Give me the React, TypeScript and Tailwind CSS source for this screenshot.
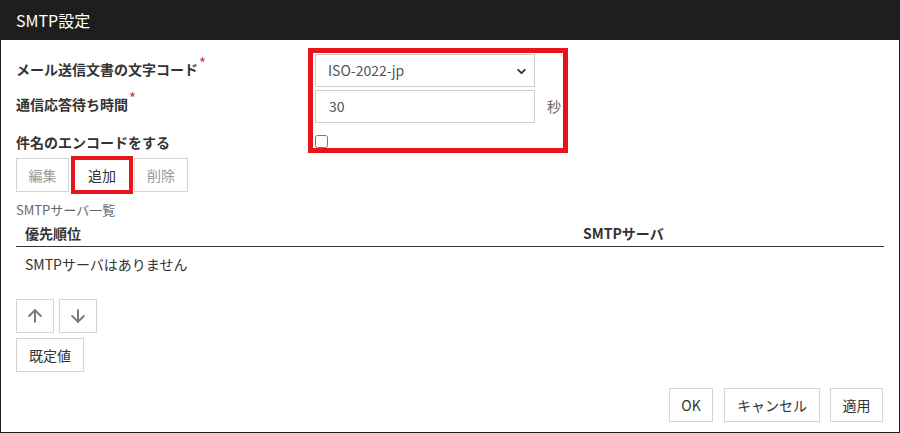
import React from "react";
import { ArrowUp, ArrowDown, ChevronDown } from "lucide-react";

const font = { fontFamily: '"Noto Sans CJK JP", "Noto Sans", sans-serif' };

function Btn({ children, className = "", disabled = false }: { children: React.ReactNode; className?: string; disabled?: boolean }) {
  return (
    <button
      className={
        "h-[34px] border border-[#d4d4d4] bg-white text-[14px] flex items-center justify-center " +
        (disabled ? "text-[#9a9a9a] " : "text-[#333] ") +
        className
      }
    >
      {children}
    </button>
  );
}

export default function App() {
  return (
    <div style={font} className="w-[900px] h-[433px] bg-white flex flex-col border-x border-b border-[#1e1e1e]">
      <div className="h-[40px] bg-[#1e1e1e] flex items-center px-[15px] text-white text-[16px] shrink-0">
        SMTP設定
      </div>
      <div className="flex-1 flex flex-col px-[15px] pt-[8px] pb-[10px]">
        {/* form */}
        <div className="flex">
          <div className="w-[292px] flex flex-col text-[14px] font-bold text-[#333] leading-[20px] pt-[11px]">
            <div>
              メール送信文書の文字コード<span className="text-[#d0352b] font-normal text-[15px] leading-[10px] align-top relative top-[-1px] ml-[1px]">*</span>
            </div>
            <div className="mt-[15px]">
              通信応答待ち時間<span className="text-[#d0352b] font-normal text-[15px] leading-[10px] align-top relative top-[-1px] ml-[1px]">*</span>
            </div>
            <div className="mt-[18px]">件名のエンコードをする</div>
          </div>
          <div className="w-[260px] border-[5px] border-[#e8141c] pl-[2px] pt-[1px] flex flex-col">
            <div className="relative w-[220px] h-[33px] border border-[#cccccc] flex items-center pl-[12px] text-[14px] text-[#555]">
              ISO-2022-jp
              <ChevronDown className="absolute right-[6px] top-[10px] text-[#333]" size={13} strokeWidth={3.5} />
            </div>
            <div className="flex items-center mt-[3px]">
              <div className="w-[220px] h-[33px] border border-[#cccccc] flex items-center pl-[13px] text-[14px] text-[#555]">
                30
              </div>
              <span className="ml-[12px] text-[14px] text-[#666]">秒</span>
            </div>
            <div className="mt-[12px] h-[13px] flex">
              <input type="checkbox" className="m-0 w-[13px] h-[13px]" />
            </div>
          </div>
        </div>

        {/* edit buttons */}
        <div className="flex items-center mt-[3px]">
          <Btn disabled className="w-[53px]">編集</Btn>
          <button className="ml-[2px] w-[62px] h-[38px] border-[4px] border-[#e8141c] bg-white text-[14px] text-[#333] flex items-center justify-center">
            追加
          </button>
          <Btn disabled className="ml-[1px] w-[54px]">削除</Btn>
        </div>

        <div className="mt-[6px] text-[13px] leading-[20px] text-[#666]">SMTPサーバ一覧</div>

        {/* table */}
        <div className="w-[868px]">
          <div className="grid grid-cols-[559px_1fr] h-[27px] items-center border-b border-[#333] text-[14px] font-bold text-[#333]">
            <div className="pl-[9px]">優先順位</div>
            <div className="pl-[8px]">SMTPサーバ</div>
          </div>
          <div className="pt-[7px] pl-[9px] text-[14px] leading-[20px] text-[#333]">SMTPサーバはありません</div>
        </div>

        <div className="flex gap-[5px] mt-[25px]">
          <Btn className="w-[38px] h-[34px]">
            <ArrowUp size={20} strokeWidth={2.4} className="text-[#7a7a7a]" />
          </Btn>
          <Btn className="w-[38px] h-[34px]">
            <ArrowDown size={20} strokeWidth={2.4} className="text-[#7a7a7a]" />
          </Btn>
        </div>
        <div className="flex mt-[5px]">
          <Btn className="w-[68px]">既定値</Btn>
        </div>

        <div className="flex justify-end mt-[16px] pr-[1px]">
          <Btn className="w-[44px]">OK</Btn>
          <Btn className="w-[96px] ml-[11px]">キャンセル</Btn>
          <Btn className="w-[53px] ml-[10px]">適用</Btn>
        </div>
      </div>
    </div>
  );
}
